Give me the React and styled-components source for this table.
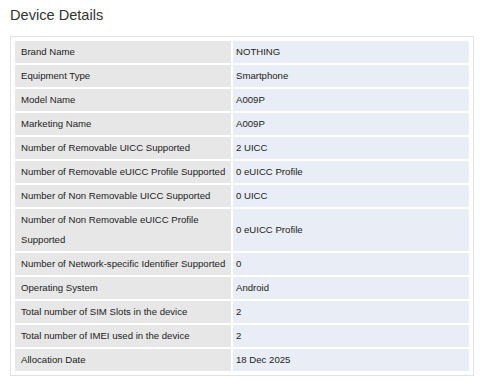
import React from 'react'
import styled, { createGlobalStyle } from 'styled-components'

const GlobalStyle = createGlobalStyle`
  body {
    margin: 0;
    background: #fff;
    font-family: "Liberation Sans", Arial, Helvetica, sans-serif;
  }
`

const Page = styled.div`
  padding: 7px 6px 0 10px;
`

const Title = styled.h2`
  margin: 0 0 12px;
  font-size: 14.6px;
  font-weight: normal;
  line-height: 17px;
  color: #333;
`

const Box = styled.div`
  border: 1px solid #e2e2e2;
  padding: 2px;
`

const Table = styled.table`
  width: 100%;
  table-layout: fixed;
  border-collapse: separate;
  border-spacing: 2px;
  font-size: 9.6px;
  color: #222;
`

const LabelCol = styled.col`
  width: 216px;
`

const Label = styled.th`
  padding: 1.25px 0 1.25px 6px;
  line-height: 19.5px;
  text-align: left;
  font-weight: normal;
  vertical-align: middle;
  background: #e7e7e7;
`

const Value = styled.td`
  padding: 1.25px 3px;
  line-height: 19.5px;
  vertical-align: middle;
  background: #e9edf5;
`

const details = [
  ['Brand Name', 'NOTHING'],
  ['Equipment Type', 'Smartphone'],
  ['Model Name', 'A009P'],
  ['Marketing Name', 'A009P'],
  ['Number of Removable UICC Supported', '2 UICC'],
  ['Number of Removable eUICC Profile Supported', '0 eUICC Profile'],
  ['Number of Non Removable UICC Supported', '0 UICC'],
  ['Number of Non Removable eUICC Profile Supported', '0 eUICC Profile'],
  ['Number of Network-specific Identifier Supported', '0'],
  ['Operating System', 'Android'],
  ['Total number of SIM Slots in the device', '2'],
  ['Total number of IMEI used in the device', '2'],
  ['Allocation Date', '18 Dec 2025'],
]

function App() {
  return (
    <Page>
      <GlobalStyle />
      <Title>Device Details</Title>
      <Box>
        <Table>
          <colgroup>
            <LabelCol />
            <col />
          </colgroup>
          <tbody>
            {details.map(([label, value]) => (
              <tr key={label}>
                <Label>{label}</Label>
                <Value>{value}</Value>
              </tr>
            ))}
          </tbody>
        </Table>
      </Box>
    </Page>
  )
}

export default App
